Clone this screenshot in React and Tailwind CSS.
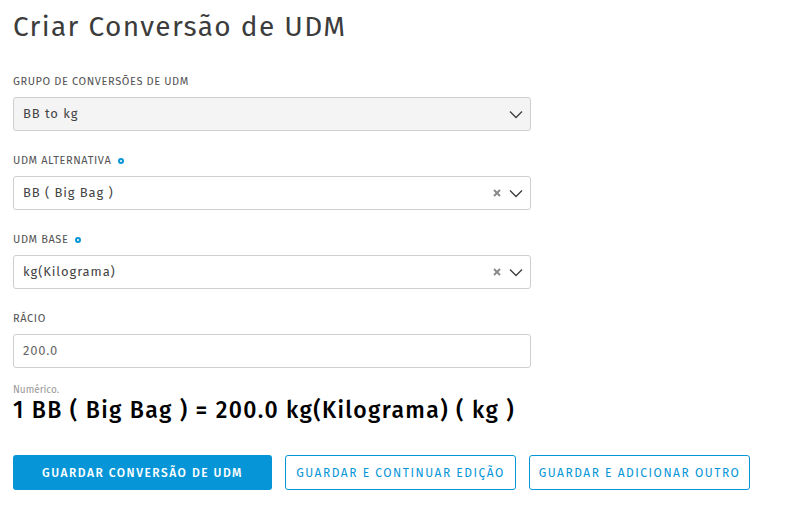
import React from "react";

const font = { fontFamily: '"Fira Sans", "Open Sans", "Noto Sans", sans-serif' };

function Chevron() {
  return (
    <svg width="14" height="9" viewBox="0 0 14 9" className="shrink-0">
      <path d="M1 1.5 L7 7.5 L13 1.5" fill="none" stroke="#3c3c3c" strokeWidth="1.3" />
    </svg>
  );
}

function Clear() {
  return (
    <svg width="8" height="8" viewBox="0 0 8 8" className="shrink-0">
      <path d="M1 1 L7 7 M7 1 L1 7" fill="none" stroke="#8a8a8a" strokeWidth="2" />
    </svg>
  );
}

function Dot() {
  return <span className="ml-[7px] inline-block h-[6px] w-[6px] rounded-full border-2 border-[#0696d7]" />;
}

function Label({ children, req }) {
  return (
    <div className="flex h-[14px] items-center text-[11px] uppercase leading-[14px] tracking-[0.6px] text-[#555]">
      {children}
      {req && <Dot />}
    </div>
  );
}

function Select({ value, gray, clear }) {
  return (
    <div
      className={`mt-[8px] flex h-[34px] w-[518px] items-center rounded-[3px] border border-[#cfcfcf] pl-[9px] pr-[7px] text-[13px] text-[#444] ${
        gray ? "bg-[#f4f4f4]" : "bg-white"
      }`}
    >
      <span className="flex-1 tracking-[0.9px]">{value}</span>
      {clear && <span className="mr-[8px] flex"><Clear /></span>}
      <Chevron />
    </div>
  );
}

export default function App() {
  return (
    <div className="min-h-[526px] w-[799px] bg-white pl-[13px]" style={font}>
      <h1 className="pt-[10px] text-[28px] leading-[33px] tracking-[1.35px] text-[#3c3c3c]">
        Criar Conversão de UDM
      </h1>
      <div className="mt-[32px]">
        <Label>Grupo de conversões de UDM</Label>
        <Select value="BB to kg" gray />
      </div>
      <div className="mt-[23px]">
        <Label req>UDM alternativa</Label>
        <Select value="BB ( Big Bag )" clear />
      </div>
      <div className="mt-[23px]">
        <Label req>UDM base</Label>
        <Select value="kg(Kilograma)" clear />
      </div>
      <div className="mt-[23px]">
        <Label>Rácio</Label>
        <div className="mt-[8px] flex h-[34px] w-[518px] items-center rounded-[3px] border border-[#cfcfcf] pl-[9px] text-[13px] tracking-[0.8px] text-[#666]">
          200.0
        </div>
      </div>
      <div className="mt-[16px] text-[10px] leading-[12px] text-[#999]">Numérico.</div>
      <div className="mt-[1px] text-[23px] font-medium leading-[27px] tracking-[1.35px] text-black">
        1 BB ( Big Bag ) = 200.0 kg(Kilograma) ( kg )
      </div>
      <div className="mt-[31px] flex gap-[13px]">
        <button className="flex h-[35px] w-[259px] items-center justify-center rounded-[3px] bg-[#0696d7] text-[12px] font-medium tracking-[1.5px] text-white">
          GUARDAR CONVERSÃO DE UDM
        </button>
        <button className="flex h-[35px] w-[231px] items-center justify-center rounded-[3px] border border-[#0696d7] bg-white text-[12px] tracking-[1.5px] text-[#0696d7]">
          GUARDAR E CONTINUAR EDIÇÃO
        </button>
        <button className="flex h-[35px] w-[221px] items-center justify-center rounded-[3px] border border-[#0696d7] bg-white text-[12px] tracking-[1.5px] text-[#0696d7]">
          GUARDAR E ADICIONAR OUTRO
        </button>
      </div>
    </div>
  );
}
